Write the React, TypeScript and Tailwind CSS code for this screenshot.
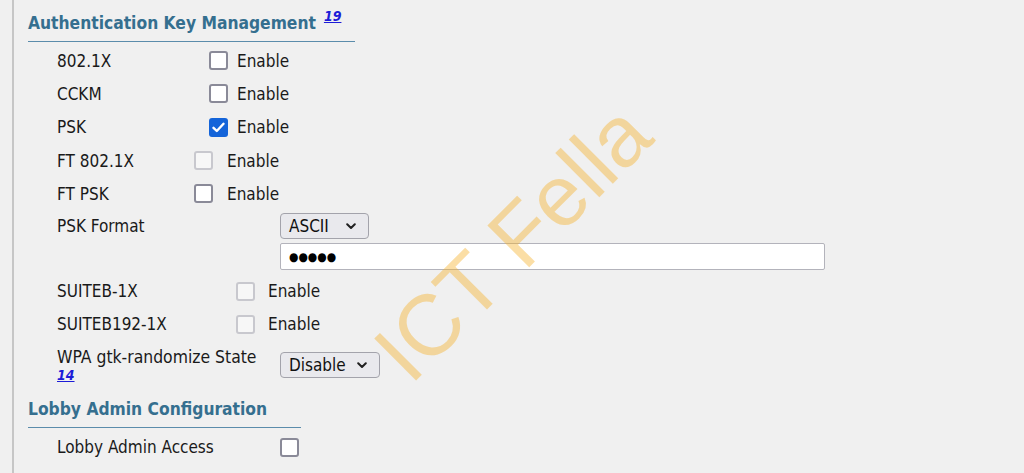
import React from "react";

const FONT = { fontFamily: '"DejaVu Sans Condensed", "DejaVu Sans", sans-serif' };

function Box({ state }: { state: "off" | "on" | "disabled" }) {
  if (state === "on") {
    return (
      <span className="flex h-[19px] w-[19px] shrink-0 items-center justify-center rounded-[3px] bg-[#1464d9]">
        <svg width="13" height="11" viewBox="0 0 13 11">
          <path d="M1.5 5.8 L4.8 9 L11.5 1.8" fill="none" stroke="#ffffff" strokeWidth="2.4" strokeLinecap="round" strokeLinejoin="round" />
        </svg>
      </span>
    );
  }
  if (state === "disabled") {
    return <span className="block h-[19px] w-[19px] shrink-0 rounded-[3px] border-2 border-[#c8c8ce] bg-[#f7f7f7]" />;
  }
  return <span className="block h-[19px] w-[19px] shrink-0 rounded-[3px] border-[2.5px] border-[#8a8a98] bg-white" />;
}

function Chevron() {
  return (
    <svg width="10" height="7" viewBox="0 0 10 7">
      <path d="M1.2 1.2 L5 5 L8.8 1.2" fill="none" stroke="#202020" strokeWidth="2" strokeLinecap="round" strokeLinejoin="round" />
    </svg>
  );
}

function Select({ label, width }: { label: string; width: string }) {
  return (
    <div className={`flex h-[26px] ${width} items-center justify-between rounded-[4px] border border-[#a3a3ab] bg-[#e9e9ed] pl-[8px] pr-[12px] text-[17px] text-[#111]`}>
      <span>{label}</span>
      <Chevron />
    </div>
  );
}

function CheckRow({ label, labelW, state, gap }: { label: string; labelW: string; state: "off" | "on" | "disabled"; gap: string }) {
  return (
    <div className="flex h-[33.3px] items-center">
      <div className={`${labelW} shrink-0`}>{label}</div>
      <Box state={state} />
      <span className={gap}>Enable</span>
    </div>
  );
}

export default function App() {
  return (
    <div className="relative flex h-[473px] w-[1024px] overflow-hidden bg-[#f0f0f0] text-[17px] text-[#1a1a1a]" style={FONT}>
      <div className="ml-[12px] h-full w-[2px] shrink-0 bg-[#c6c6c6]" />
      <div className="flex flex-col pl-[14px] leading-[20px]">
        <div className="mt-[13px] flex w-[327px] items-start border-b-[1.5px] border-[#5b8cab] pb-[8px]">
          <span className="text-[17.3px] font-bold text-[#356f8f]">Authentication Key Management</span>
          <span className="-mt-[7px] ml-[8px] text-[14px] font-bold italic text-[#1c1cd8] underline">19</span>
        </div>
        <div className="mt-[2px] flex flex-col pl-[29px]">
          <CheckRow label="802.1X" labelW="w-[152px]" state="off" gap="ml-[9px]" />
          <CheckRow label="CCKM" labelW="w-[152px]" state="off" gap="ml-[9px]" />
          <CheckRow label="PSK" labelW="w-[152px]" state="on" gap="ml-[9px]" />
          <CheckRow label="FT 802.1X" labelW="w-[137px]" state="disabled" gap="ml-[14px]" />
          <CheckRow label="FT PSK" labelW="w-[137px]" state="off" gap="ml-[14px]" />
          <div className="mt-[3px] flex">
            <div className="w-[223px] shrink-0 pt-[3px]">PSK Format</div>
            <div className="flex flex-col gap-[4px]">
              <Select label="ASCII" width="w-[89px]" />
              <div className="flex h-[27px] w-[545px] items-center rounded-[2px] border border-[#b3b3bb] bg-white pl-[8px] text-[12px] tracking-[0px] text-black">
                ●●●●●
              </div>
            </div>
          </div>
          <div className="mt-[4px]">
            <CheckRow label="SUITEB-1X" labelW="w-[179px]" state="disabled" gap="ml-[13px]" />
            <CheckRow label="SUITEB192-1X" labelW="w-[179px]" state="disabled" gap="ml-[13px]" />
          </div>
          <div className="mt-[7px] flex items-start">
            <div className="flex w-[223px] shrink-0 flex-col leading-[18px]">
              <span className="text-[17.4px]">WPA gtk-randomize State</span>
              <span className="text-[14px] font-bold italic text-[#1c1cd8] underline">14</span>
            </div>
            <div className="mt-[4px]">
              <Select label="Disable" width="w-[100px]" />
            </div>
          </div>
        </div>
        <div className="mt-[15px] w-[273px] border-b-[1.5px] border-[#5b8cab] pb-[8px]">
          <span className="text-[17.3px] font-bold text-[#356f8f]">Lobby Admin Configuration</span>
        </div>
        <div className="mt-[1px] flex h-[36px] items-center pl-[29px]">
          <div className="w-[223px] shrink-0">Lobby Admin Access</div>
          <Box state="off" />
        </div>
      </div>
      <div
        className="pointer-events-none absolute left-[512px] top-[242px] -translate-x-1/2 -translate-y-1/2 -rotate-45 whitespace-nowrap text-[86px] leading-none text-[rgba(245,176,40,0.42)]"
        style={{ fontFamily: '"Liberation Sans", Arial, sans-serif' }}
      >
        ICT Fella
      </div>
    </div>
  );
}
